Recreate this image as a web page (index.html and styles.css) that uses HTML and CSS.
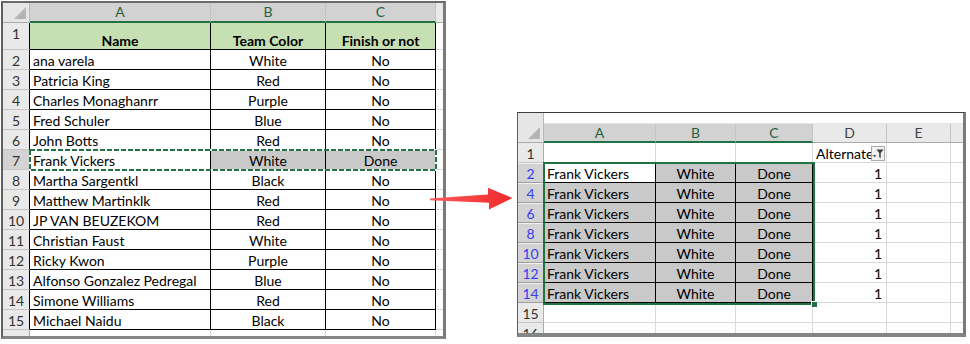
FILE: index.html
```html
<!DOCTYPE html>
<html lang="en">
<head>
    <meta charset="UTF-8">
    <meta name="viewport" content="width=device-width, initial-scale=1.0">
    <title>Filter every other row</title>
    <link rel="stylesheet" href="styles.css">
</head>

<body>
    <div class="shots">
        <!-- source list -->
        <div class="sheet sheet-src">
            <div class="grid">
                <div class="corner"></div>
                <div class="ch sel">A</div>
                <div class="ch sel">B</div>
                <div class="ch sel">C</div>
                <div class="ch gap"></div>

                <div class="rh rk">1</div>
                <div class="bx hd">Name</div>
                <div class="bx hd">Team Color</div>
                <div class="bx hd">Finish or not</div>
                <div class="gap"></div>

                <div class="rh rk">2</div><div class="bx">ana varela</div><div class="bx mid">White</div><div class="bx mid">No</div><div class="gap"></div>
                <div class="rh rk">3</div><div class="bx">Patricia King</div><div class="bx mid">Red</div><div class="bx mid">No</div><div class="gap"></div>
                <div class="rh rk">4</div><div class="bx">Charles Monaghanrr</div><div class="bx mid">Purple</div><div class="bx mid">No</div><div class="gap"></div>
                <div class="rh rk">5</div><div class="bx">Fred Schuler</div><div class="bx mid">Blue</div><div class="bx mid">No</div><div class="gap"></div>
                <div class="rh rk">6</div><div class="bx">John Botts</div><div class="bx mid">Red</div><div class="bx mid">No</div><div class="gap"></div>
                <div class="rh rk on">7</div><div class="bx">Frank Vickers</div><div class="bx mid grey">White</div><div class="bx mid grey">Done</div><div class="gap"></div>
                <div class="rh rk">8</div><div class="bx">Martha Sargentkl</div><div class="bx mid">Black</div><div class="bx mid">No</div><div class="gap"></div>
                <div class="rh rk">9</div><div class="bx">Matthew Martinklk</div><div class="bx mid">Red</div><div class="bx mid">No</div><div class="gap"></div>
                <div class="rh rk">10</div><div class="bx">JP VAN BEUZEKOM</div><div class="bx mid">Red</div><div class="bx mid">No</div><div class="gap"></div>
                <div class="rh rk">11</div><div class="bx">Christian Faust</div><div class="bx mid">White</div><div class="bx mid">No</div><div class="gap"></div>
                <div class="rh rk">12</div><div class="bx">Ricky Kwon</div><div class="bx mid">Purple</div><div class="bx mid">No</div><div class="gap"></div>
                <div class="rh rk">13</div><div class="bx">Alfonso Gonzalez Pedregal</div><div class="bx mid">Blue</div><div class="bx mid">No</div><div class="gap"></div>
                <div class="rh rk">14</div><div class="bx">Simone Williams</div><div class="bx mid">Red</div><div class="bx mid">No</div><div class="gap"></div>
                <div class="rh rk">15</div><div class="bx">Michael Naidu</div><div class="bx mid">Black</div><div class="bx mid">No</div><div class="gap"></div>

                <div class="rh cut"></div><div class="cut"></div><div class="cut"></div><div class="cut"></div><div class="gap cut"></div>
            </div>
            <!-- copy marquee round A7:C7 -->
            <svg class="marquee" width="408" height="22">
                <rect x="1" y="1" width="406" height="20" fill="none" stroke="#fff" stroke-width="2"/>
                <rect x="1" y="1" width="406" height="20" fill="none" stroke="#217346" stroke-width="2" stroke-dasharray="5 2"/>
            </svg>
        </div>

        <!-- filtered result -->
        <div class="sheet sheet-out">
            <div class="grid">
                <div class="corner tall"></div>
                <div class="strip"></div>

                <div class="ch sel">A</div>
                <div class="ch sel">B</div>
                <div class="ch sel">C</div>
                <div class="ch">D</div>
                <div class="ch">E</div>
                <div class="ch gap"></div>

                <div class="rh">1</div>
                <div></div>
                <div></div>
                <div></div>
                <div class="flt">Alternate
                    <span class="fbtn">
                        <svg width="12" height="13" viewBox="0 0 12 13">
                            <path d="M0.5 8h4l-2 2.5z" fill="#666"/>
                            <path d="M4.5 2.5h7l-2.8 3.6v5.2l-1.5-1.1v-4.1z" fill="#3c3c3c"/>
                        </svg>
                    </span>
                </div>
                <div></div>
                <div class="gap"></div>

                <div class="rh on blue">2</div><div class="bx">Frank Vickers</div><div class="bx mid grey">White</div><div class="bx mid grey">Done</div><div class="num">1</div><div></div><div class="gap"></div>
                <div class="rh on blue">4</div><div class="bx grey">Frank Vickers</div><div class="bx mid grey">White</div><div class="bx mid grey">Done</div><div class="num">1</div><div></div><div class="gap"></div>
                <div class="rh on blue">6</div><div class="bx grey">Frank Vickers</div><div class="bx mid grey">White</div><div class="bx mid grey">Done</div><div class="num">1</div><div></div><div class="gap"></div>
                <div class="rh on blue">8</div><div class="bx grey">Frank Vickers</div><div class="bx mid grey">White</div><div class="bx mid grey">Done</div><div class="num">1</div><div></div><div class="gap"></div>
                <div class="rh on blue">10</div><div class="bx grey">Frank Vickers</div><div class="bx mid grey">White</div><div class="bx mid grey">Done</div><div class="num">1</div><div></div><div class="gap"></div>
                <div class="rh on blue">12</div><div class="bx grey">Frank Vickers</div><div class="bx mid grey">White</div><div class="bx mid grey">Done</div><div class="num">1</div><div></div><div class="gap"></div>
                <div class="rh on blue">14</div><div class="bx grey">Frank Vickers</div><div class="bx mid grey">White</div><div class="bx mid grey">Done</div><div class="num">1</div><div></div><div class="gap"></div>

                <div class="rh">15</div><div></div><div></div><div></div><div></div><div></div><div class="gap"></div>
                <div class="rh cut">16</div><div class="cut"></div><div class="cut"></div><div class="cut"></div><div class="cut"></div><div class="cut"></div><div class="gap cut"></div>
            </div>
            <!-- selection A2:C14 -->
            <div class="selection"><span class="handle"></span></div>
        </div>

        <svg class="arrow" width="88" height="28" viewBox="428 185 88 28">
            <defs>
                <linearGradient id="red" x1="0" x2="1" y1="0" y2="0">
                    <stop offset="0" stop-color="#ff5a5a"/>
                    <stop offset="1" stop-color="#f0292c"/>
                </linearGradient>
            </defs>
            <polygon points="430,198.6 488,194.6 488,187.8 512.5,198 489,209.5 489,202.8 430,200.2" fill="url(#red)"/>
        </svg>
    </div>
</body>

</html>
```

FILE: styles.css
```css
body {
    margin: 0;
    background: #fff;
    font-family: Lato, "Liberation Sans", sans-serif;
    font-size: 14px;
    color: #000;
}

.shots {
    position: relative;
    display: flex;
    align-items: flex-start;
    width: 970px;
    height: 344px;
}

.sheet {
    position: relative;
    background: #fff;
    border-style: solid;
    border-color: #6b6b6b #7a7a7a #858585 #5e5e5e;
}

.sheet-src {
    margin: 1px 0 0 1px;
    border-width: 2px 3px 3px 2px;
}

.sheet-out {
    margin: 112px 0 0 71px;
    border-width: 1px 3px 4px 1px;
    border-top-color: #3c3c3c;
}

.grid {
    display: grid;
    overflow: hidden;
}

.sheet-src .grid {
    grid-template-columns: 27px 181px 115px 110px 7px;
    grid-template-rows: 20px 27px repeat(14, 20px) 6px;
}

.sheet-out .grid {
    grid-template-columns: 26px 112px 80px 77px 74px 64px 12px;
    grid-template-rows: 11px 19px repeat(9, 20px) 10px;
}

.grid > div {
    box-sizing: border-box;
    border-right: 1px solid #d9d9d9;
    border-bottom: 1px solid #d9d9d9;
    padding: 0 3px;
    line-height: 21px;
    white-space: nowrap;
    overflow: hidden;
}

/* headers */
.grid .corner {
    position: relative;
    background: #e6e6e6;
    border-right-color: #b8b8b8;
    border-bottom-color: #ababab;
}

.corner::after {
    content: "";
    position: absolute;
    right: 3px;
    bottom: 3px;
    border-style: solid;
    border-width: 0 0 12px 12px;
    border-color: transparent transparent #b5b5b5 transparent;
}

.grid .tall {
    grid-row: span 2;
}

.grid .strip {
    grid-column: 2 / -1;
    border-right: 0;
    border-bottom-color: #e4e4e4;
    background: #fff;
}

.grid .ch {
    padding: 0;
    text-align: center;
    background: #e9e9e9;
    color: #444;
    border-right-color: #c3c3c3;
    border-bottom-color: #ababab;
    line-height: 18px;
}

.grid .ch.sel {
    background: #d2d2d2;
    color: #27613b;
    border-bottom: 2px solid #217346;
}

.grid .rh {
    padding: 0;
    text-align: center;
    background: #e9e9e9;
    color: #333;
    border-right-color: #ababab;
    border-bottom-color: #c6c6c6;
}

.grid .rh.rk {
    border-right-color: #000;
}

.grid .rh.on {
    background: #d3d3d3;
}

.grid .rh.blue {
    color: #3a3af2;
    border-bottom-color: #9e9e9e;
    box-shadow: inset 0 1px 0 #f2f2f2;
}

/* cells */
.grid .bx {
    border-right-color: #000;
    border-bottom-color: #000;
}

.grid .hd {
    background: #c6e0b4;
    font-weight: bold;
    text-align: center;
    padding-top: 8px;
    line-height: 19px;
}

.grid .mid {
    text-align: center;
}

.grid .grey {
    background: #c9c9c9;
}

.grid .num {
    text-align: right;
    padding-right: 4px;
}

.grid .gap {
    border-right: 0;
}

.grid .cut {
    border-bottom: 0;
}

.grid .flt {
    position: relative;
    overflow: hidden;
}

.fbtn {
    position: absolute;
    top: 3px;
    right: 1px;
    width: 14px;
    height: 15px;
    box-sizing: border-box;
    border: 1px solid #a9a9a9;
    background: #f1f1f1;
}

.fbtn svg {
    display: block;
}

/* overlays */
.marquee {
    position: absolute;
    left: 26px;
    top: 146px;
}

.selection {
    position: absolute;
    left: 25px;
    top: 49px;
    width: 268px;
    height: 139px;
    border: 2px solid #217346;
}

.handle {
    position: absolute;
    right: -4px;
    bottom: -4px;
    width: 5px;
    height: 5px;
    background: #217346;
    border: 1px solid #fff;
    border-width: 1px 0 0 1px;
}

.arrow {
    position: absolute;
    left: 428px;
    top: 185px;
}
```
